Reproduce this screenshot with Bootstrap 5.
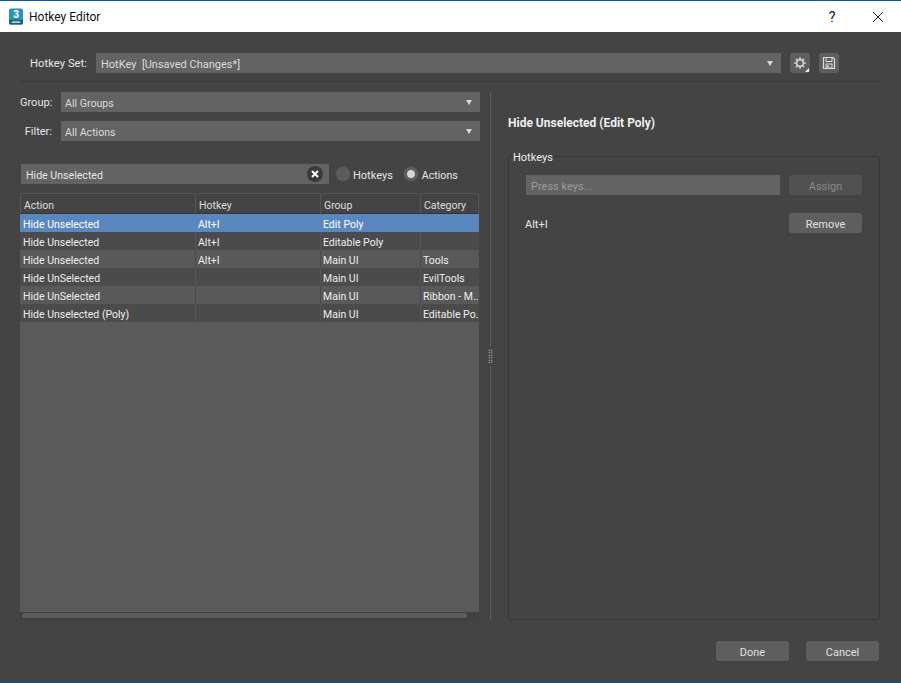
<!DOCTYPE html>
<html lang="en">
<head>
<meta charset="UTF-8">
<title>Hotkey Editor</title>
<link href="https://cdn.jsdelivr.net/npm/bootstrap@5.3.0/dist/css/bootstrap.min.css" rel="stylesheet">
<style>
html, body { height: 100%; }
body { background: #444; color: #e6e6e6; font-family: Roboto, "Open Sans", sans-serif; font-size: 11px; line-height: 16px; overflow: hidden; }
label, .legend { padding-top: 2px; }
.window { width: 901px; height: 683px; border-top: 1px solid #0a5a9c; border-bottom: 1px solid #0f5277; }
.titlebar { height: 31px; background: #fff; color: #111; font-size: 12px; padding-left: 9px; }
.titlebar .logo { margin-right: 6px; }
.titlebar .tb-help { width: 46px; font-size: 14px; text-align: center; }
.titlebar .tb-close { width: 46px; text-align: center; }
.content { height: 650px; padding: 21px 21px 0 20px; }
.field { height: 20px; min-height: 20px; background-color: #636363; border: 0; border-radius: 0; color: #dcdcdc; font-size: 11px; line-height: 17px; padding: 3px 5px 0; box-shadow: none; }
.field:focus { background-color: #636363; color: #dcdcdc; box-shadow: none; }
.form-select.field { background-image: url("data:image/svg+xml,%3csvg xmlns='http://www.w3.org/2000/svg' viewBox='0 0 8 6'%3e%3cpath fill='%23d8d8d8' d='M0 0h8L4 6z'/%3e%3c/svg%3e"); background-position: right 8px center; background-size: 6px 4.5px; }
.set-row { padding-left: 10px; padding-right: 41px; margin-bottom: 8px; }
.set-row label { width: 66px; flex: none; font-size: 11.3px; }
.icon-btn { width: 20px; height: 20px; flex: none; padding: 0; background: #5e5e5e; border: 0; border-radius: 3px; margin-left: 9px; display: flex; align-items: center; justify-content: center; position: relative; }
.icon-btn .corner { position: absolute; right: 1px; bottom: 1px; width: 0; height: 0; border-left: 4px solid transparent; border-bottom: 4px solid #eee; }
.rule { border-top: 1px solid #383838; margin: 0 0 10px 0; }
.left { width: 460px; flex: none; }
.left .form-select.field { font-size: 10.6px; padding-left: 4px; }
.row-label { width: 41px; flex: none; text-align: right; padding-right: 9px; white-space: nowrap; }
.search { position: relative; width: 308px; flex: none; margin-left: 1px; }
.search .field { width: 100%; color: #e6e6e6; font-size: 10.6px; }
.search .clear { position: absolute; right: 6px; top: 2px; width: 16px; height: 16px; border-radius: 50%; background: #3a3a3a; border: 0; padding: 0; display: flex; align-items: center; justify-content: center; }
.form-check { min-height: 0; }
.form-check label { padding-top: 3px; }
.form-check-input.radio { width: 16px; height: 16px; flex: none; margin: 0; float: none; border: 1px solid #4a4a4a; background: #5c5c5c; box-shadow: none; }
.form-check-input.radio:checked { background: radial-gradient(circle, #d6d6d6 0 3.5px, #5f5f5f 4.5px); border-color: #4a4a4a; }
.r-hotkeys { margin-left: 6px; gap: 2px; }
.r-actions { margin-left: 10px; gap: 3px; font-size: 10.6px; }
.grid { flex: 1; background: #5a5a5a; border-top: 1px solid #555; min-height: 0; margin-right: 1px; }
.grid table { width: 459px; table-layout: fixed; margin: 0; border-collapse: separate; border-spacing: 0; color: #eee; font-size: 10.5px; }
.grid th, .grid td { padding: 3px 0 0 2px; height: 18px; line-height: 15px; font-weight: 400; white-space: nowrap; overflow: hidden; background: transparent; color: inherit; border: 0; border-right: 1px solid #555; box-shadow: none; }
.grid td:first-child { padding-left: 3px; }
.grid thead th { height: 20px; padding: 0 0 0 3px; background: #444; border-right: 1px solid #555; border-bottom: 1px solid #353535; color: #ddd; }
.grid thead th:first-child { border-left: 1px solid #555; }
.grid tbody tr:nth-child(even) td { background: #4b4b4b; border-right-color: #555; }
.grid tbody tr:nth-child(odd) td { background: #595959; border-right-color: #4a4a4a; }
.grid tbody tr.sel td { background: #5b87bf; color: #fff; border-right-color: #5b87bf; }
.grid tbody td:last-child { border-right: 0; }
.hscroll { height: 8px; background: #404040; padding: 1px 12px 1px 2px; margin-right: 1px; }
.hscroll div { height: 5px; background: #5c5c5c; border-radius: 3px; }
.splitter { width: 1px; background: #5e5e5e; margin: 0 17px 0 10px; position: relative; }
.splitter .grip { position: absolute; left: -2px; top: 254px; width: 5px; height: 20px; border-top: 3px solid #444; border-bottom: 3px solid #444; background-image: radial-gradient(circle, #bbb 0.6px, transparent 0.9px); background-size: 2.5px 2.5px; background-color: #444; }
.right { width: 372px; flex: none; }
.right h6 { font-size: 12px; line-height: 16px; font-weight: 700; color: #eee; margin: 0; padding-top: 23px; height: 64px; }
.group { height: 464px; border: 1px solid #383838; border-radius: 3px; position: relative; padding: 18px 17px 0 17px; }
.group .legend { position: absolute; left: 3px; top: -9px; background: #444; padding-left: 1px; padding-right: 1px; line-height: 16px; color: #eee; }
.btn.flat { width: 73px; height: 20px; padding: 3px 0 0; font-size: 11px; line-height: 17px; border: 0; border-radius: 3px; background: #5e5e5e; color: #e0e0e0; }
.btn.flat:disabled { background: #515151; color: #8a8a8a; opacity: 1; }
.press { width: 254px; flex: none; color: #9a9a9a; }
.press::placeholder { color: #9a9a9a; }
.alt { margin-left: -1px; padding-top: 4px; }
.footer { padding-top: 21px; padding-right: 1px; gap: 17px; }
.body-row { height: 528px; flex: none; }
.gap-group { margin-bottom: 9px; }
.gap-filter { margin-bottom: 23px; }
.gap-search { margin-bottom: 9px; }
.gap-press { margin-bottom: 18px; }
</style>
</head>
<body>
<div class="window d-flex flex-column">
  <div class="titlebar d-flex align-items-center flex-shrink-0">
    <svg class="logo" width="14" height="17" viewBox="0 0 15 17"><rect width="15" height="17" rx="2" fill="#2b93b5"/><rect y="12" width="15" height="5" rx="1" fill="#1f5f78"/><rect x="3" y="13.5" width="9" height="2" fill="#9cc"/><text x="7.5" y="10.5" text-anchor="middle" font-family="Liberation Sans" font-weight="700" font-size="11" fill="#fff">3</text></svg>
    <span>Hotkey Editor</span>
    <span class="tb-help ms-auto">?</span>
    <span class="tb-close"><svg width="12" height="12" viewBox="0 0 12 12"><path d="M1 1l10 10M11 1L1 11" stroke="#222" stroke-width="1" fill="none"/></svg></span>
  </div>

  <div class="content d-flex flex-column flex-grow-1">
    <div class="set-row d-flex align-items-center">
      <label>Hotkey Set:</label>
      <select class="form-select field flex-grow-1"><option>HotKey&nbsp; [Unsaved Changes*]</option></select>
      <button class="icon-btn" type="button"><svg width="14" height="14" viewBox="0 0 14 14"><circle cx="7" cy="7" r="3.4" fill="none" stroke="#d0d0d0" stroke-width="1.8"/><path d="M7 1.2v2M7 10.8v2M1.2 7h2M10.8 7h2M2.9 2.9l1.4 1.4M9.7 9.7l1.4 1.4M11.1 2.9L9.7 4.3M4.3 9.7l-1.4 1.4" stroke="#d0d0d0" stroke-width="1.6"/></svg><span class="corner"></span></button>
      <button class="icon-btn" type="button"><svg width="14" height="14" viewBox="0 0 14 14"><path d="M1.5 1.5h9.5l1.5 1.5v9.5h-11z" fill="none" stroke="#ddd" stroke-width="1.2"/><path d="M4 2v3.5h6V2" fill="none" stroke="#ddd"/><rect x="4" y="8" width="6" height="4" fill="none" stroke="#ddd"/><rect x="5" y="9.5" width="2" height="1.5" fill="#ddd"/></svg></button>
    </div>
    <div class="rule"></div>

    <div class="body-row d-flex">
      <div class="left d-flex flex-column">
        <div class="d-flex align-items-center gap-group">
          <label class="row-label">Group:</label>
          <select class="form-select field flex-grow-1"><option>All Groups</option></select>
        </div>
        <div class="d-flex align-items-center gap-filter">
          <label class="row-label">Filter:</label>
          <select class="form-select field flex-grow-1"><option>All Actions</option></select>
        </div>
        <div class="d-flex align-items-center gap-search">
          <div class="search">
            <input class="form-control field" value="Hide Unselected">
            <button class="clear" type="button"><svg width="8" height="8" viewBox="0 0 8 8"><path d="M1 1l6 6M7 1L1 7" stroke="#fff" stroke-width="2"/></svg></button>
          </div>
          <div class="form-check d-flex align-items-center p-0 mb-0 r-hotkeys"><input class="form-check-input radio" type="radio" name="mode" id="r1"><label for="r1">Hotkeys</label></div>
          <div class="form-check d-flex align-items-center p-0 mb-0 r-actions"><input class="form-check-input radio" type="radio" name="mode" id="r2" checked><label for="r2">Actions</label></div>
        </div>
        <div class="grid">
          <table class="table">
            <colgroup><col style="width:176px"><col style="width:125px"><col style="width:100px"><col></colgroup>
            <thead><tr><th>Action</th><th>Hotkey</th><th>Group</th><th>Category</th></tr></thead>
            <tbody>
              <tr class="sel"><td>Hide Unselected</td><td>Alt+I</td><td>Edit Poly</td><td></td></tr>
              <tr><td>Hide Unselected</td><td>Alt+I</td><td>Editable Poly</td><td></td></tr>
              <tr><td>Hide Unselected</td><td>Alt+I</td><td>Main UI</td><td>Tools</td></tr>
              <tr><td>Hide UnSelected</td><td></td><td>Main UI</td><td>EvilTools</td></tr>
              <tr><td>Hide UnSelected</td><td></td><td>Main UI</td><td>Ribbon - M..</td></tr>
              <tr><td>Hide Unselected (Poly)</td><td></td><td>Main UI</td><td>Editable Po.</td></tr>
            </tbody>
          </table>
        </div>
        <div class="hscroll"><div></div></div>
      </div>

      <div class="splitter"><div class="grip"></div></div>

      <div class="right">
        <h6>Hide Unselected (Edit Poly)</h6>
        <div class="group">
          <span class="legend">Hotkeys</span>
          <div class="d-flex align-items-center justify-content-between gap-press">
            <input class="form-control field press" placeholder="Press keys...">
            <button class="btn flat" type="button" disabled>Assign</button>
          </div>
          <div class="d-flex align-items-center justify-content-between">
            <span class="alt">Alt+I</span>
            <button class="btn flat" type="button">Remove</button>
          </div>
        </div>
      </div>
    </div>

    <div class="footer d-flex justify-content-end">
      <button class="btn flat" type="button">Done</button>
      <button class="btn flat" type="button">Cancel</button>
    </div>
  </div>
</div>
</body>
</html>
